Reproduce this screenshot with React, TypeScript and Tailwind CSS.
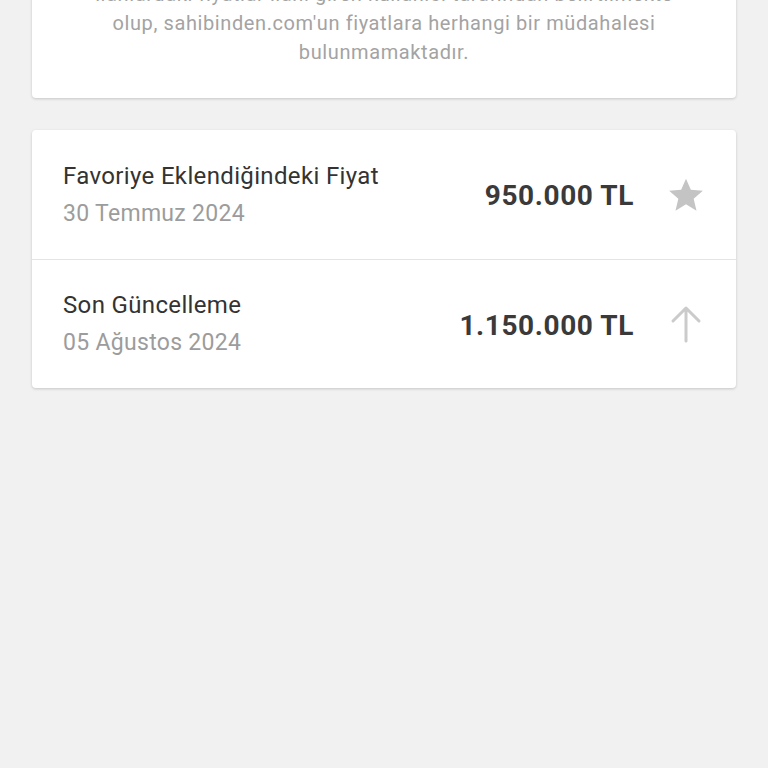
const rows = [
  { title: "Favoriye Eklendiğindeki Fiyat", date: "30 Temmuz 2024", price: "950.000 TL", icon: "star" },
  { title: "Son Güncelleme", date: "05 Ağustos 2024", price: "1.150.000 TL", icon: "up" },
];

const Star = () => (
  <svg width="40" height="40" viewBox="0 0 24 24" fill="#c4c4c4">
    <path d="M12 2.2l2.9 6.7 7.2.6-5.5 4.8 1.7 7.1-6.3-3.8-6.3 3.8 1.7-7.1-5.5-4.8 7.2-.6z" />
  </svg>
);

const Up = () => (
  <svg width="32" height="38" viewBox="0 0 32 38" fill="none" stroke="#cbcbcb" strokeWidth="3" strokeLinecap="round" strokeLinejoin="round">
    <path d="M16 36V3M3 16L16 3l13 13" />
  </svg>
);

export default function App() {
  return (
    <div className="min-h-[768px] bg-[#f1f1f1] px-8 overflow-hidden font-['Roboto',sans-serif]">
      <div className="-mt-[20px] bg-white rounded-sm shadow-[0_1px_3px_rgba(0,0,0,0.18)] px-6 pb-[31px]">
        <p className="text-center text-[20px] leading-[29px] tracking-[0.6px] text-[#a3a3a3] whitespace-nowrap">
          ilanlardaki fiyatlar ilanı giren kullanıcı tarafından belirtilmekte
          <br />
          olup, sahibinden.com'un fiyatlara herhangi bir müdahalesi
          <br />
          bulunmamaktadır.
        </p>
      </div>

      <div className="mt-8 bg-white rounded-sm shadow-[0_1px_3px_rgba(0,0,0,0.18)]">
        {rows.map((r, i) => (
          <div
            key={r.title}
            className={`flex items-center h-[129px] pl-[31px] pr-[29px] ${i > 0 ? "border-t border-[#e4e4e4]" : ""}`}
          >
            <div className="flex-1 flex flex-col gap-[10px]">
              <span className="text-[24px] leading-[28px] tracking-[0.35px] text-[#333]">{r.title}</span>
              <span className="text-[23px] leading-[28px] tracking-[0.3px] text-[#9c9c9c]">{r.date}</span>
            </div>
            <span className="pt-[3px] text-[28px] font-bold text-[#3a3a3a] tracking-[0.6px]">{r.price}</span>
            <div className="w-[42px] ml-[31px] flex justify-center">
              {r.icon === "star" ? <Star /> : <Up />}
            </div>
          </div>
        ))}
      </div>
    </div>
  );
}
